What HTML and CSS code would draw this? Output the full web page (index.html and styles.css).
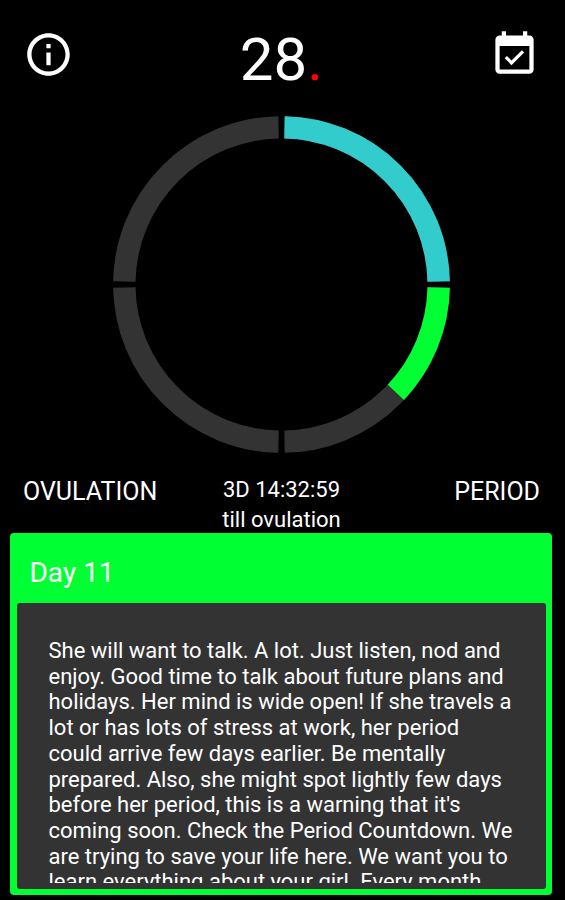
FILE: index.html
```
<!DOCTYPE html>
<html lang="en">
  <head>
    <meta charset="UTF-8" />
    <meta name="viewport" content="width=device-width, initial-scale=1.0" />
    <title>28.</title>
    <link rel="stylesheet" href="styles.css">
  </head>
  <body>
    <header class="top-bar">
      <svg class="icon" viewBox="0 0 24 24">
        <path d="M11 7h2v2h-2zm0 4h2v6h-2zm1-9C6.48 2 2 6.48 2 12s4.48 10 10 10 10-4.48 10-10S17.52 2 12 2zm0 18c-4.41 0-8-3.59-8-8s3.59-8 8-8 8 3.59 8 8-3.59 8-8 8z" />
      </svg>
      <h1 class="logo">28<span class="dot">.</span></h1>
      <svg class="icon" viewBox="0 0 24 24">
        <path d="M16.53 11.06L15.47 10l-4.88 4.88-2.12-2.12-1.06 1.06L10.59 17l5.94-5.94zM19 3h-1V1h-2v2H8V1H6v2H5c-1.11 0-1.99.9-1.99 2L3 19c0 1.1.89 2 2 2h14c1.1 0 2-.9 2-2V5c0-1.1-.9-2-2-2zm0 16H5V8h14v11z" />
      </svg>
    </header>

    <!-- one arc per week, clockwise from the top -->
    <svg class="cycle" viewBox="-168.5 -168.5 337 337">
      <circle class="week" r="157.2" pathLength="360" />
      <circle class="week-one" r="157.2" pathLength="360" />
      <circle class="week-two" r="157.2" pathLength="360" />
    </svg>

    <section class="status">
      <div class="label">OVULATION</div>
      <div class="countdown">3D 14:32:59<br>till ovulation</div>
      <div class="label right">PERIOD</div>
    </section>

    <section class="day-card">
      <h2 class="day-title">Day 11</h2>
      <div class="day-body">
        <p class="day-text">She will want to talk. A lot. Just listen, nod and enjoy. Good time to talk about future plans and holidays. Her mind is wide open! If she travels a lot or has lots of stress at work, her period could arrive few days earlier. Be mentally prepared. Also, she might spot lightly few days before her period, this is a warning that it's coming soon. Check the Period Countdown. We are trying to save your life here. We want you to learn everything about your girl. Every month</p>
      </div>
    </section>
  </body>
</html>
```
FILE: styles.css
```
* {
  box-sizing: border-box;
}

body {
  margin: 0;
  height: 900px;
  overflow: hidden;
  background-color: #000;
  color: #fff;
  font-family: Roboto, sans-serif;
}

.top-bar {
  display: flex;
  justify-content: space-between;
  height: 116px;
  padding: 28.5px 25px 0 23px;
}

.icon {
  width: 51px;
  height: 51px;
  fill: #fff;
}

.logo {
  margin: -3.5px 0 0;
  font-size: 60px;
  font-weight: 400;
  line-height: 70px;
}

.dot {
  color: #f00;
}

.cycle {
  display: block;
  width: 337px;
  height: 337px;
  margin-left: 113px;
}

.cycle circle {
  fill: none;
  stroke-width: 22.4;
}

.week {
  stroke: #333;
  stroke-dasharray: 87.8 2.2;
  stroke-dashoffset: -1.1;
}

.week-one {
  stroke: #3cc;
  stroke-dasharray: 87.8 272.2;
  stroke-dashoffset: 88.9;
}

.week-two {
  stroke: #00ff33;
  stroke-dasharray: 42.2 317.8;
  stroke-dashoffset: -1.1;
}

.status {
  display: grid;
  grid-template-columns: 1fr auto 1fr;
  height: 80px;
  padding: 22px 25px 0 23px;
}

.label {
  padding-top: 3px;
  font-size: 25px;
  line-height: 28px;
}

.label.right {
  text-align: right;
}

.countdown {
  font-size: 22px;
  line-height: 30px;
  text-align: center;
}

.day-card {
  width: 542px;
  height: 362px;
  margin-left: 10.4px;
  padding: 0 6.6px 6px;
  border-radius: 4px;
  background-color: #00ff33;
}

.day-title {
  height: 70px;
  margin: 0;
  padding: 5px 0 0 12.5px;
  font-size: 28px;
  font-weight: 400;
  line-height: 70px;
}

.day-body {
  height: 286px;
  padding: 35px 31px 6px 31.5px;
  border-radius: 3px;
  background-color: #333;
}

.day-text {
  height: 245px;
  margin: 0;
  overflow: hidden;
  font-size: 22px;
  line-height: 25.72px;
}
```
